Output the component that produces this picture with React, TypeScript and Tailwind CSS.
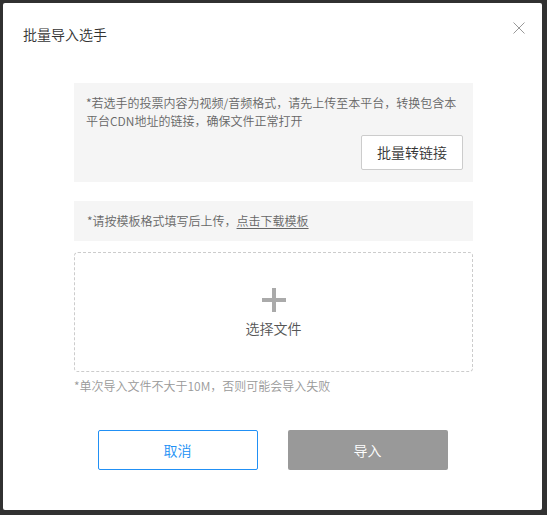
const App = () => {
    return (
        <div className="w-[547px] h-[515px] bg-[#313131] pt-[3px] pl-[3px] font-['Noto_Sans_CJK_SC',sans-serif]">
            <div className="relative w-[539px] h-[507px] bg-white rounded-[2px] flex flex-col">
                {/* Header */}
                <div className="pt-[21px] pl-[20px] text-[14px] leading-[20px] text-[#333] font-[350]">批量导入选手</div>
                <button className="absolute top-[19px] right-[17px]">
                    <svg width="12" height="12" viewBox="0 0 12 12" fill="none" stroke="#999" strokeWidth="1">
                        <path d="M0.5 0.5 L11.5 11.5 M11.5 0.5 L0.5 11.5" />
                    </svg>
                </button>

                <div className="ml-[71px] w-[399px] flex flex-col font-[350]">
                    {/* CDN tip */}
                    <div className="mt-[39px] h-[99px] bg-[#f5f5f5] pt-[11px] pl-[12px] pr-[10px] flex flex-col">
                        <p className="text-[12px] leading-[18px] text-[#666]">
                            *若选手的投票内容为视频/音频格式，请先上传至本平台，转换包含本平台CDN地址的链接，确保文件正常打开
                        </p>
                        <div className="mt-[5px] flex justify-end">
                            <button className="w-[102px] h-[35px] bg-white border border-[#ccc] rounded-[2px] text-[14px] text-[#333]">
                                批量转链接
                            </button>
                        </div>
                    </div>

                    {/* Template tip */}
                    <div className="mt-[19px] h-[40px] bg-[#f5f5f5] pl-[13px] flex items-center text-[12px] text-[#666]">
                        *请按模板格式填写后上传，<span className="underline underline-offset-2 cursor-pointer">点击下载模板</span>
                    </div>

                    {/* Upload area */}
                    <div className="mt-[11px] h-[120px] border border-dashed border-[#ccc] rounded-[4px] flex flex-col items-center justify-center cursor-pointer">
                        <svg width="24" height="24" viewBox="0 0 24 24" className="mt-[2px]">
                            <rect x="0" y="10" width="24" height="4" fill="#aaa" />
                            <rect x="10" y="0" width="4" height="24" fill="#aaa" />
                        </svg>
                        <div className="mt-[6px] text-[14px] leading-[20px] text-[#555]">选择文件</div>
                    </div>

                    <p className="mt-[5px] text-[12px] leading-[18px] text-[#999]">*单次导入文件不大于10M，否则可能会导入失败</p>
                </div>

                {/* Footer */}
                <div className="mt-[35px] flex justify-center gap-[30px] font-[350]">
                    <button className="w-[160px] h-[40px] border border-[#2190f5] rounded-[2px] text-[14px] text-[#2190f5] bg-white">
                        取消
                    </button>
                    <button className="w-[160px] h-[40px] rounded-[2px] text-[14px] text-white bg-[#999]">
                        导入
                    </button>
                </div>
            </div>
        </div>
    );
};

export default App;
